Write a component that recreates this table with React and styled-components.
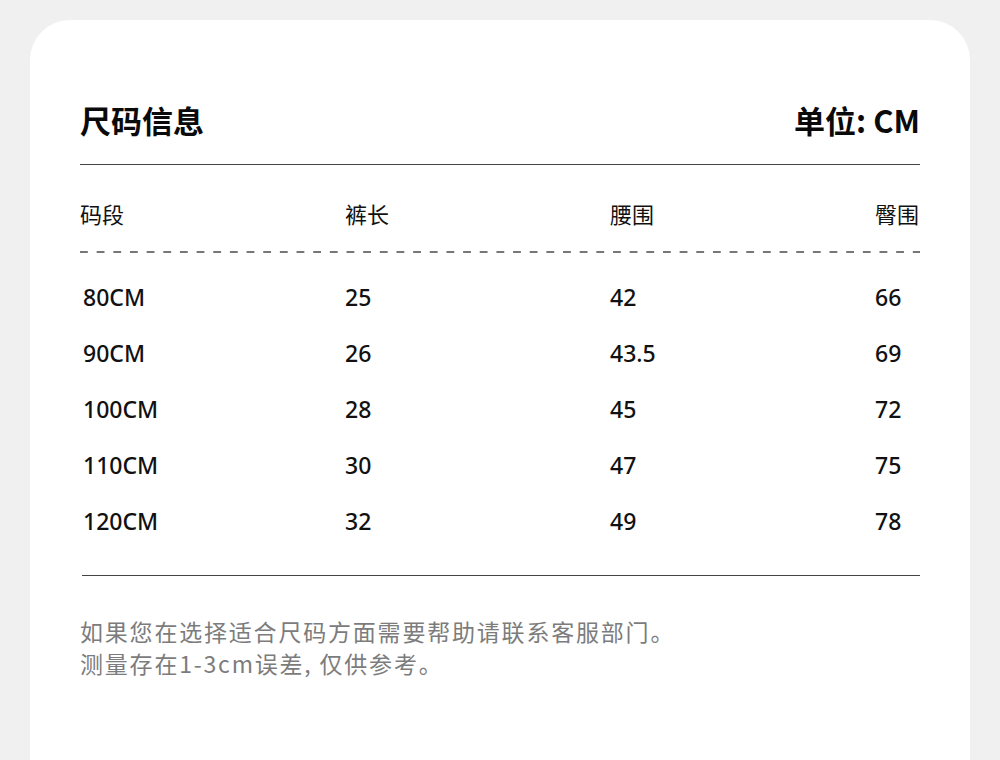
import React from "react";
import styled, { createGlobalStyle } from "styled-components";

const sizes = [
  { size: "80CM", length: "25", waist: "42", hip: "66" },
  { size: "90CM", length: "26", waist: "43.5", hip: "69" },
  { size: "100CM", length: "28", waist: "45", hip: "72" },
  { size: "110CM", length: "30", waist: "47", hip: "75" },
  { size: "120CM", length: "32", waist: "49", hip: "78" },
];

const GlobalStyle = createGlobalStyle`
  html, body {
    margin: 0;
    padding: 0;
    background: #f0f0f0;
  }
  body {
    font-family: "Noto Sans", "Noto Sans CJK SC", sans-serif;
    color: #111111;
  }
`;

export default function App() {
  return (
    <Page>
      <GlobalStyle />
      <Card>
        <Header>
          <Title>尺码信息</Title>
          <Title>单位: CM</Title>
        </Header>
        <HeadRow>
          <HeadCell>码段</HeadCell>
          <HeadCell>裤长</HeadCell>
          <HeadCell>腰围</HeadCell>
          <HeadCell>臀围</HeadCell>
        </HeadRow>
        <Body>
          {sizes.map((r) => (
            <DataRow key={r.size}>
              <DataCell $first>{r.size}</DataCell>
              <DataCell>{r.length}</DataCell>
              <DataCell>{r.waist}</DataCell>
              <DataCell>{r.hip}</DataCell>
            </DataRow>
          ))}
        </Body>
        <Note>
          如果您在选择适合尺码方面需要帮助请联系客服部门。
          <br />
          测量存在1-3cm误差, 仅供参考。
        </Note>
      </Card>
    </Page>
  );
}

const Page = styled.div`
  width: 1000px;
  height: 760px;
  overflow: hidden;
  padding: 20px 30px 0;
  box-sizing: border-box;
`;

const Card = styled.div`
  width: 940px;
  min-height: 780px;
  box-sizing: border-box;
  padding: 80px 50px 0;
  background: #ffffff;
  border-radius: 40px 40px 0 0;
`;

const Header = styled.div`
  display: flex;
  justify-content: space-between;
  align-items: center;
  padding-bottom: 24px;
  border-bottom: 1.5px solid #444444;
`;

const Title = styled.div`
  font-size: 31px;
  font-weight: 700;
  line-height: 40px;
  color: #0a0a0a;
  font-family: "Noto Sans CJK SC", "Noto Sans", sans-serif;
`;

const HeadRow = styled.div`
  display: grid;
  grid-template-columns: 265px 265px 265px 1fr;
  padding: 33px 0 25px;
  background-image: linear-gradient(to right, #777777 8px, transparent 8px);
  background-size: 16.67px 2px;
  background-repeat: repeat-x;
  background-position: left bottom;
`;

const HeadCell = styled.div`
  font-size: 22px;
  line-height: 30px;
  font-family: "Noto Sans CJK SC", sans-serif;
  color: #111111;
`;

const Body = styled.div`
  margin-left: 2px;
  padding: 16px 0 26px;
  border-bottom: 1.5px solid #444444;
`;

const DataRow = styled.div`
  display: grid;
  grid-template-columns: 263px 265px 265px 1fr;
  height: 56px;
  align-items: center;
`;

const DataCell = styled.div`
  font-size: 23px;
  font-weight: 500;
  line-height: 30px;
  font-family: "Noto Sans", sans-serif;
  color: #111111;
  padding-left: ${(p) => (p.$first ? "1px" : "0")};
`;

const Note = styled.div`
  padding-top: 39px;
  font-size: 23px;
  line-height: 32px;
  letter-spacing: 1.8px;
  color: #7c7c7c;
  font-family: "Noto Sans CJK SC", sans-serif;
`;
